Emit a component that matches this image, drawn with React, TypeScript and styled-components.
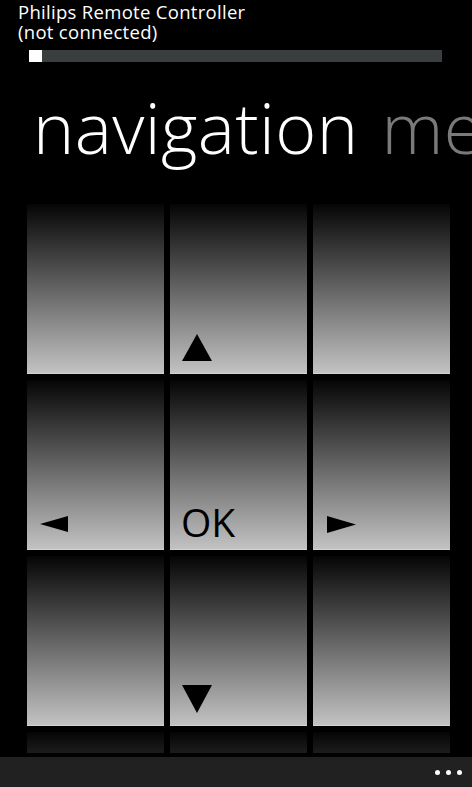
import React from "react";
import styled, { createGlobalStyle } from "styled-components";

const Global = createGlobalStyle`
  html, body {
    margin: 0;
    padding: 0;
    background: #000;
    width: 472px;
    height: 787px;
    overflow: hidden;
  }
  * { box-sizing: border-box; }
`;

const Screen = styled.div`
  width: 472px;
  height: 787px;
  background: #000;
  display: flex;
  flex-direction: column;
  overflow: hidden;
  font-family: "Open Sans", "Noto Sans", sans-serif;
  color: #fff;
`;

const TitleBlock = styled.div`
  padding: 2px 0 0 18px;
  font-size: 18.5px;
  line-height: 19.5px;
  letter-spacing: 0.3px;
  color: #fff;
`;

const Progress = styled.div`
  margin: 9px 0 0 29px;
  width: 413px;
  height: 12px;
  background: #3a3e3e;
  display: flex;
`;

const ProgressFill = styled.div`
  height: 100%;
  background: #fff;
`;

const PivotRow = styled.div`
  display: flex;
  gap: 23px;
  padding-left: 33px;
  margin-top: 25px;
  white-space: nowrap;
  font-weight: 300;
  font-size: 70px;
  line-height: 80px;
  letter-spacing: 0.4px;
`;

const PivotItem = styled.span<{ $active?: boolean }>`
  color: ${(p) => (p.$active ? "#ffffff" : "#7a7a7a")};
`;

const GridViewport = styled.div`
  margin: 37px 0 0 27px;
  height: 549px;
  overflow: hidden;
`;

const Grid = styled.div`
  display: grid;
  grid-template-columns: repeat(3, 137px);
  grid-auto-rows: 170px;
  column-gap: 6px;
  row-gap: 6px;
`;

const Tile = styled.button`
  all: unset;
  box-sizing: border-box;
  display: flex;
  align-items: flex-end;
  padding: 0 0 12px 12px;
  background: linear-gradient(to bottom, #050505 0%, #c2c2c2 100%);
  border-bottom: 1px solid #d2d2d2;
  color: #000;
  font-family: "Open Sans", "Noto Sans", sans-serif;
  font-size: 39px;
  line-height: 1;
  cursor: pointer;
`;

const Glyph = styled.svg<{ $dx?: number; $dy?: number }>`
  display: block;
  margin-left: ${(p) => p.$dx ?? 0}px;
  margin-bottom: ${(p) => p.$dy ?? 0}px;
`;

const OkLabel = styled.span`
  display: block;
  margin-bottom: -4px;
  margin-left: -1px;
`;

const Spacer = styled.div`
  flex: 1;
`;

const AppBar = styled.div`
  height: 30px;
  background: #212121;
  display: flex;
  align-items: center;
  justify-content: flex-end;
  padding-right: 10px;
  gap: 6px;
`;

const Dot = styled.span`
  width: 5px;
  height: 5px;
  border-radius: 50%;
  background: #fff;
`;

const Up = () => (
  <Glyph width="30" height="27" viewBox="0 0 30 27" $dy={0}>
    <polygon points="15,0 30,27 0,27" fill="#000" />
  </Glyph>
);
const Down = () => (
  <Glyph width="30" height="28" viewBox="0 0 30 28" $dy={0}>
    <polygon points="0,0 30,0 15,28" fill="#000" />
  </Glyph>
);
const Left = () => (
  <Glyph width="28" height="16" viewBox="0 0 28 16" $dx={1} $dy={5}>
    <polygon points="0,8 28,0 28,16" fill="#000" />
  </Glyph>
);
const Right = () => (
  <Glyph width="29" height="17" viewBox="0 0 29 17" $dx={2} $dy={4}>
    <polygon points="0,0 29,8.5 0,17" fill="#000" />
  </Glyph>
);

type Cell = { key: string; content?: React.ReactNode };

const cells: Cell[] = [
  { key: "a" },
  { key: "up", content: <Up /> },
  { key: "b" },
  { key: "left", content: <Left /> },
  { key: "ok", content: <OkLabel>OK</OkLabel> },
  { key: "right", content: <Right /> },
  { key: "c" },
  { key: "down", content: <Down /> },
  { key: "d" },
  { key: "e" },
  { key: "f" },
  { key: "g" },
];

export default function App() {
  return (
    <>
      <Global />
      <Screen>
        <TitleBlock>
          <div>Philips Remote Controller</div>
          <div>(not connected)</div>
        </TitleBlock>
        <Progress>
          <ProgressFill style={{ width: "13px" }} />
        </Progress>
        <PivotRow>
          <PivotItem $active>navigation</PivotItem>
          <PivotItem>media</PivotItem>
        </PivotRow>
        <GridViewport>
          <Grid>
            {cells.map((c) => (
              <Tile key={c.key}>{c.content}</Tile>
            ))}
          </Grid>
        </GridViewport>
        <Spacer />
        <AppBar>
          <Dot />
          <Dot />
          <Dot />
        </AppBar>
      </Screen>
    </>
  );
}
